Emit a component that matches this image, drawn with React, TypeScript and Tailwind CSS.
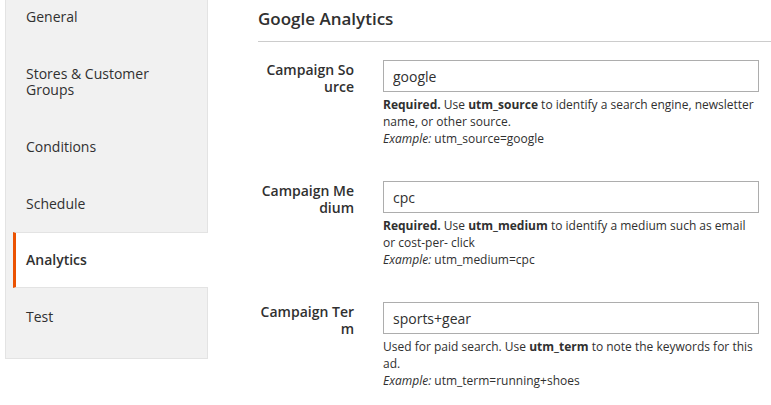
import React from 'react';

const NAV_ITEMS = ['General', 'Stores & Customer Groups', 'Conditions', 'Schedule', 'Analytics', 'Test'];
const ACTIVE = 'Analytics';

interface FieldProps {
  label: string;
  value: string;
  children: React.ReactNode;
}

function Field({ label, value, children }: FieldProps) {
  return (
    <div className="flex items-start">
      <div className="w-[95px] ml-[1px] pt-[1px] text-right text-[14px] leading-[17px] font-semibold text-[#303030] break-all">
        {label}
      </div>
      <div className="ml-[29px] w-[376px]">
        <input
          readOnly
          value={value}
          className="w-full h-[32px] border border-[#adadad] px-[9px] text-[14px] text-[#303030] outline-none"
        />
        <div className="mt-[4px] text-[12px] leading-[17px] text-[#303030]">{children}</div>
      </div>
    </div>
  );
}

export default function App() {
  return (
    <div
      className="w-[771px] h-[405px] overflow-hidden bg-white flex"
      style={{ fontFamily: '"Open Sans", "Noto Sans", Arial, sans-serif' }}
    >
      {/* Side navigation */}
      <div className="ml-[5px] w-[203px] self-start -mt-[13px] bg-[#f1f1f1] border border-[#e3e3e3] pb-[13px] pl-[7px]">
        {NAV_ITEMS.map((item) => {
          const isActive = item === ACTIVE;
          return (
            <div
              key={item}
              className={`border-l-[3px] pl-[10px] pr-[20px] text-[14px] leading-[16px] ${
                isActive
                  ? 'border-l-[#eb5202] bg-white -mr-[1px] font-semibold text-[#303030] border-y border-y-[#e3e3e3] py-[19px]'
                  : 'border-l-transparent text-[#303030] py-[20.5px]'
              }`}
            >
              {item}
            </div>
          );
        })}
      </div>

      {/* Main content */}
      <div className="ml-[50px] flex-1">
        <div className="pt-[8px] pb-[11px] border-b border-[#cccccc]">
          <h2 className="text-[17px] leading-[22px] font-semibold text-[#303030]">Google Analytics</h2>
        </div>

        <div className="mt-[18px] flex flex-col gap-[34px]">
          <Field label="Campaign Source" value="google">
            <div>
              <span className="font-bold">Required.</span> Use <span className="font-bold">utm_source</span> to
              identify a search engine, newsletter name, or other source.
            </div>
            <div>
              <em>Example:</em> utm_source=google
            </div>
          </Field>
          <Field label="Campaign Medium" value="cpc">
            <div>
              <span className="font-bold">Required.</span> Use <span className="font-bold">utm_medium</span> to
              identify a medium such as email or cost-per- click
            </div>
            <div>
              <em>Example:</em> utm_medium=cpc
            </div>
          </Field>
          <Field label="Campaign Term" value="sports+gear">
            <div>
              Used for paid search. Use <span className="font-bold">utm_term</span> to note the keywords for this
              ad.
            </div>
            <div>
              <em>Example:</em> utm_term=running+shoes
            </div>
          </Field>
        </div>
      </div>
    </div>
  );
}
